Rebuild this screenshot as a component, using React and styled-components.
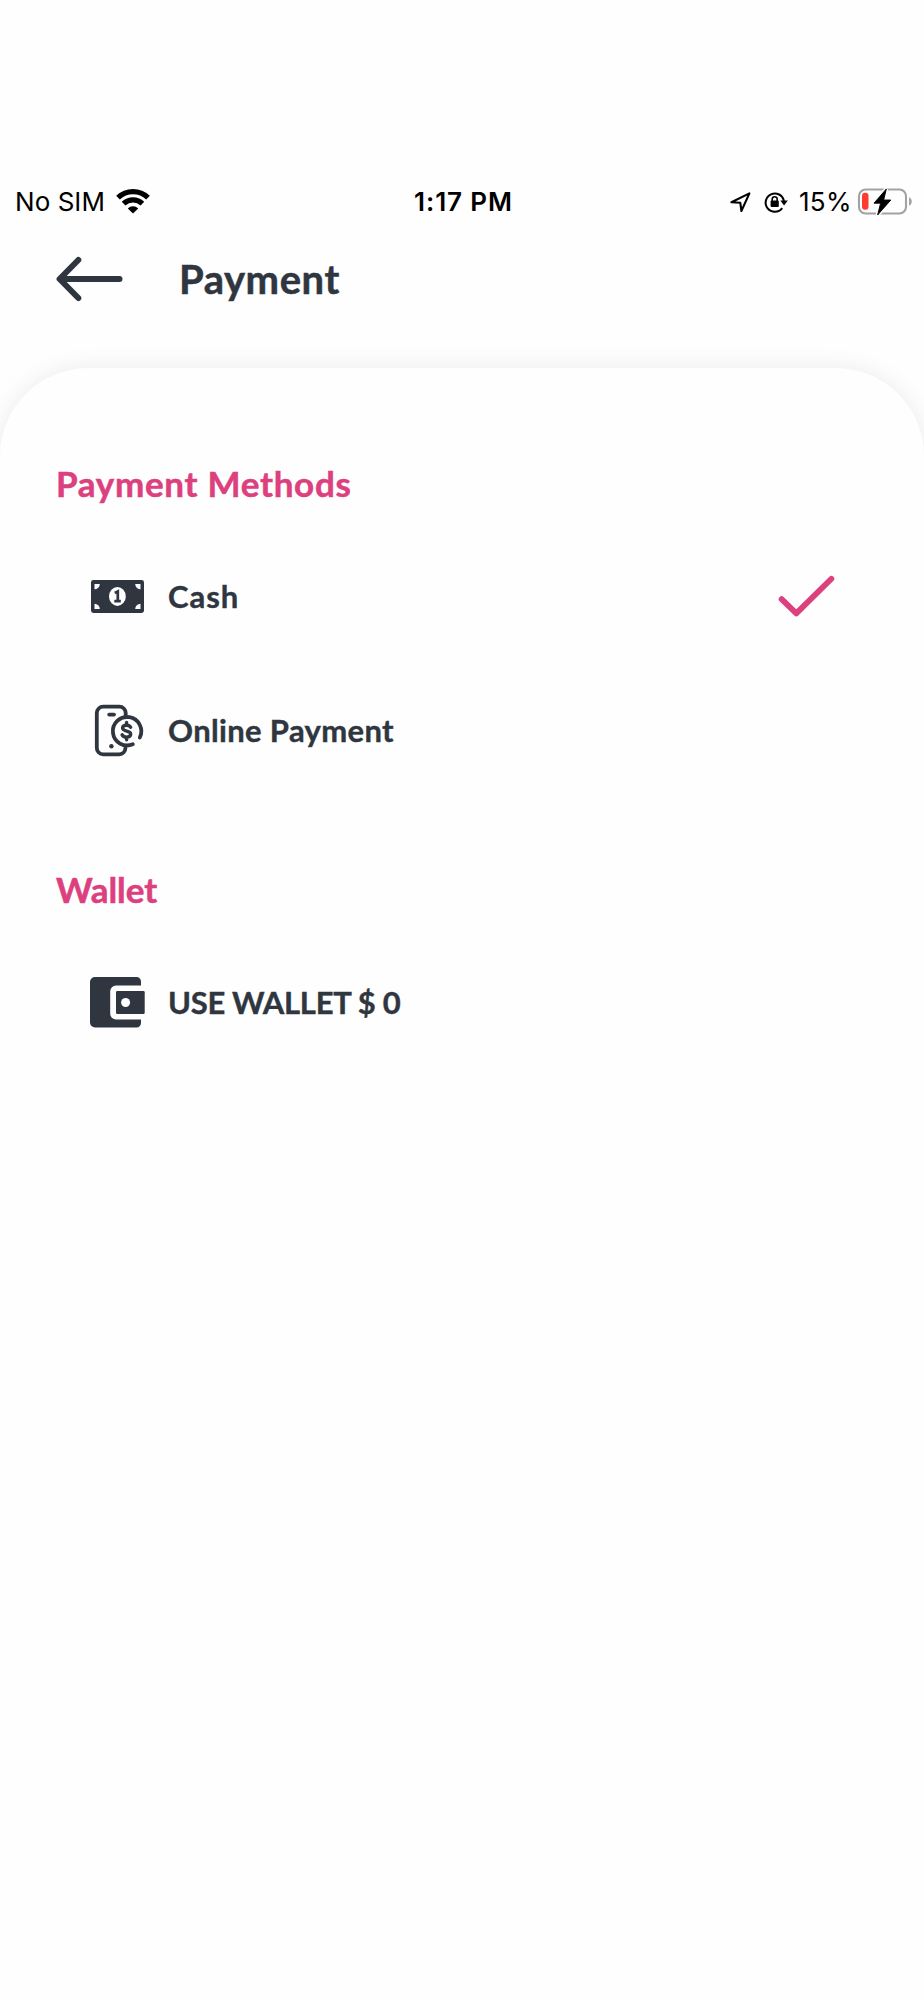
import React from "react";
import styled, { createGlobalStyle } from "styled-components";

const ink = "#2f3640";
const pink = "#dc407e";

const GlobalStyle = createGlobalStyle`
  * { box-sizing: border-box; }
  body { margin: 0; background: #fefefe; }
`;

const Screen = styled.div`
  display: flex;
  flex-direction: column;
  width: 924px;
  height: 2000px;
  padding-top: 171px;
  overflow: hidden;
  background: #fefefe;
  color: ${ink};
  font-family: Lato, "Liberation Sans", sans-serif;
`;

const StatusBar = styled.header`
  display: grid;
  grid-template-columns: 1fr auto 1fr;
  align-items: center;
  height: 62px;
  padding: 0 12px 0 15px;
  color: #000;
  font-family: Inter, "Liberation Sans", sans-serif;
  font-size: 26px;
  line-height: 32px;
  white-space: nowrap;
`;

const StatusGroup = styled.div`
  display: flex;
  align-items: center;
  justify-content: ${(p) => (p.$end ? "flex-end" : "flex-start")};
`;

const StatusText = styled.span`
  margin-left: ${(p) => p.$gap || 0}px;
  font-weight: ${(p) => (p.$strong ? 600 : 400)};
  letter-spacing: ${(p) => p.$tracking || "0"};
`;

const Icon = styled.svg`
  display: block;
  flex: none;
  overflow: visible;
  margin-left: ${(p) => p.$gap || 0}px;
`;

const TitleBar = styled.div`
  display: flex;
  align-items: center;
  height: 91px;
  padding-left: 56px;
`;

const Title = styled.h1`
  margin: 0 0 0 57px;
  font-size: 40px;
  line-height: 48px;
  font-weight: 700;
  letter-spacing: ${(p) => p.$tracking};
  -webkit-text-stroke: 0.5px currentColor;
`;

const Sheet = styled.main`
  flex: 1;
  margin-top: 44px;
  padding: 90px 57px 0 56px;
  border-radius: 88px 88px 0 0;
  background: #fefefe;
  box-shadow: 0 0 24px rgba(0, 0, 0, 0.08);
`;

const Section = styled.section`
  margin-bottom: 94px;
`;

const SectionTitle = styled.h2`
  margin: 0;
  color: ${pink};
  font-size: 35px;
  line-height: 50px;
  font-weight: 700;
  letter-spacing: ${(p) => p.$tracking};
  -webkit-text-stroke: 0.5px currentColor;
`;

const Options = styled.div`
  display: flex;
  flex-direction: column;
  gap: 54px;
  padding: 48px 32px 0 33px;
`;

const Option = styled.div`
  display: flex;
  align-items: center;
  height: 80px;
`;

const OptionLabel = styled.span`
  flex: 1;
  margin-left: 22px;
  font-size: 31px;
  line-height: 40px;
  font-weight: 700;
  letter-spacing: ${(p) => p.$tracking};
  white-space: nowrap;
  -webkit-text-stroke: 0.4px currentColor;
`;

const Wifi = () => (
  <Icon $gap={11} width="34" height="27" viewBox="0 0 34 27">
    <g fill="none" stroke="#000" strokeWidth="5.3">
      <path d="M2 8.7a21.5 21.5 0 0 1 30 0" />
      <path d="M7.6 14.7a13.5 13.5 0 0 1 18.8 0" />
    </g>
    <path d="M17 24.5l-5.2-5.1a7.4 7.4 0 0 1 10.4 0z" />
  </Icon>
);

const Location = () => (
  <Icon width="21" height="21" viewBox="0 0 21 21">
    <path d="M19.4 1.4L11.4 19L10.3 10.7L1.4 10.2Z" fill="none" stroke="#000" strokeWidth="2.1" strokeLinejoin="round" />
  </Icon>
);

const RotationLock = () => (
  <Icon $gap={13} width="24" height="22" viewBox="0 0 24 22">
    <path d="M18.2 17.2A9.2 9.2 0 1 1 19.9 10" fill="none" stroke="#000" strokeWidth="2" />
    <path d="M16.3 9.6h7.5l-3.7 4.8z" />
    <rect x="6.6" y="9.5" width="8.2" height="6.6" rx="1" />
    <path d="M8.2 10V8.2a2.5 2.5 0 0 1 5 0V10" fill="none" stroke="#000" strokeWidth="1.6" />
  </Icon>
);

const Battery = () => (
  <Icon $gap={6} width="54" height="29" viewBox="0 0 54 29">
    <rect x="1" y="1.5" width="47" height="24" rx="6.5" fill="none" stroke="#a2a2a4" strokeWidth="2.1" />
    <path d="M51 9.3c3.7 1.2 3.7 7.3 0 8.5z" fill="#a2a2a4" />
    <rect x="4" y="4.8" width="6.5" height="17" rx="3" fill="#ff3b30" />
    <path d="M28.3 1L16 15.2h6.6l-3 11.8 13.2-15h-7.1z" stroke="#fefefe" strokeWidth="4" />
    <path d="M28.3 1L16 15.2h6.6l-3 11.8 13.2-15h-7.1z" stroke="#000" strokeWidth="0.9" />
  </Icon>
);

const BackArrow = () => (
  <Icon width="66" height="44" viewBox="0 0 66 44">
    <path d="M22.3 3L3.6 22L22.3 41M5 22h58.5" fill="none" stroke={ink} strokeWidth="6" strokeLinecap="round" strokeLinejoin="round" />
  </Icon>
);

const CashIcon = () => (
  <Icon width="57" height="57" viewBox="0 0 57 57">
    <rect x="2" y="12" width="53" height="33" rx="2.4" fill={ink} />
    <path d="M5.5 16h5.3a5.3 5.3 0 0 1-5.3 5.3zM51.5 16h-5.3a5.3 5.3 0 0 0 5.3 5.3zM5.5 41h5.3a5.3 5.3 0 0 0-5.3-5.3zM51.5 41h-5.3a5.3 5.3 0 0 1 5.3-5.3z" fill="#fefefe" />
    <ellipse cx="28.4" cy="28.4" rx="8.4" ry="9.5" fill="#fefefe" />
    <path d="M25.8 25l3-1.6v10M25.3 33.2h6.5" fill="none" stroke={ink} strokeWidth="2.7" />
  </Icon>
);

const OnlineIcon = () => (
  <Icon width="57" height="57" viewBox="0 0 57 57">
    <g fill="none" stroke={ink} strokeWidth="3.8" strokeLinecap="round">
      <path d="M36.7 12.8V11a6.4 6.4 0 0 0-6.4-6.4H14.2A6.4 6.4 0 0 0 7.8 11v35a6.4 6.4 0 0 0 6.4 6.4h16.1a6.4 6.4 0 0 0 6.1-6.3" />
      <path d="M50.8 35.5A14.2 14.2 0 1 0 43.8 42.2" />
      <path d="M20.2 12.6h4.8" />
      <path d="M41.6 25.2c-.8-1.5-2.2-2-4-2-2.4 0-4 1.1-4 2.9 0 4.1 8.1 1.8 8.1 5.9 0 2-1.8 3.1-4.1 3.1-2 0-3.8-.8-4.5-2.4M37.6 20.4v2.4M37.6 35.5v2.2" strokeWidth="3.4" />
    </g>
    <circle cx="22.4" cy="44.2" r="2.2" fill={ink} />
  </Icon>
);

const WalletIcon = () => (
  <Icon width="57" height="57" viewBox="0 0 57 57">
    <path d="M6 3h41.5a4.5 4.5 0 0 1 4.5 4.5v4H27a5.8 5.8 0 0 0-5.8 5.8v22.4a5.8 5.8 0 0 0 5.8 5.8h25v3.5a4.5 4.5 0 0 1-4.5 4.5H6A5 5 0 0 1 1 48.5V8a5 5 0 0 1 5-5z" fill={ink} />
    <rect x="27" y="17" width="28.7" height="23" rx="1.2" fill={ink} />
    <circle cx="36.6" cy="28.5" r="4.5" fill="#fefefe" />
  </Icon>
);

const Check = () => (
  <Icon width="57" height="42" viewBox="0 0 57 42">
    <path d="M3.6 24.2L18.3 38.4L53.4 3.8" fill="none" stroke={pink} strokeWidth="5.8" strokeLinecap="round" strokeLinejoin="round" />
  </Icon>
);

export default function App() {
  return (
    <>
      <GlobalStyle />
      <Screen>
        <StatusBar>
          <StatusGroup>
            <StatusText $tracking="0.05px">No SIM</StatusText>
            <Wifi />
          </StatusGroup>
          <StatusText $strong $tracking="0.9px">1:17 PM</StatusText>
          <StatusGroup $end>
            <Location />
            <RotationLock />
            <StatusText $gap={11} $tracking="0.4px">15%</StatusText>
            <Battery />
          </StatusGroup>
        </StatusBar>
        <TitleBar>
          <BackArrow />
          <Title $tracking="0.55px">Payment</Title>
        </TitleBar>
        <Sheet>
          <Section>
            <SectionTitle $tracking="0.7px">Payment Methods</SectionTitle>
            <Options>
              <Option>
                <CashIcon />
                <OptionLabel $tracking="1px">Cash</OptionLabel>
                <Check />
              </Option>
              <Option>
                <OnlineIcon />
                <OptionLabel $tracking="0.35px">Online Payment</OptionLabel>
              </Option>
            </Options>
          </Section>
          <Section>
            <SectionTitle $tracking="0">Wallet</SectionTitle>
            <Options>
              <Option>
                <WalletIcon />
                <OptionLabel $tracking="-0.3px">USE WALLET $ 0</OptionLabel>
              </Option>
            </Options>
          </Section>
        </Sheet>
      </Screen>
    </>
  );
}
